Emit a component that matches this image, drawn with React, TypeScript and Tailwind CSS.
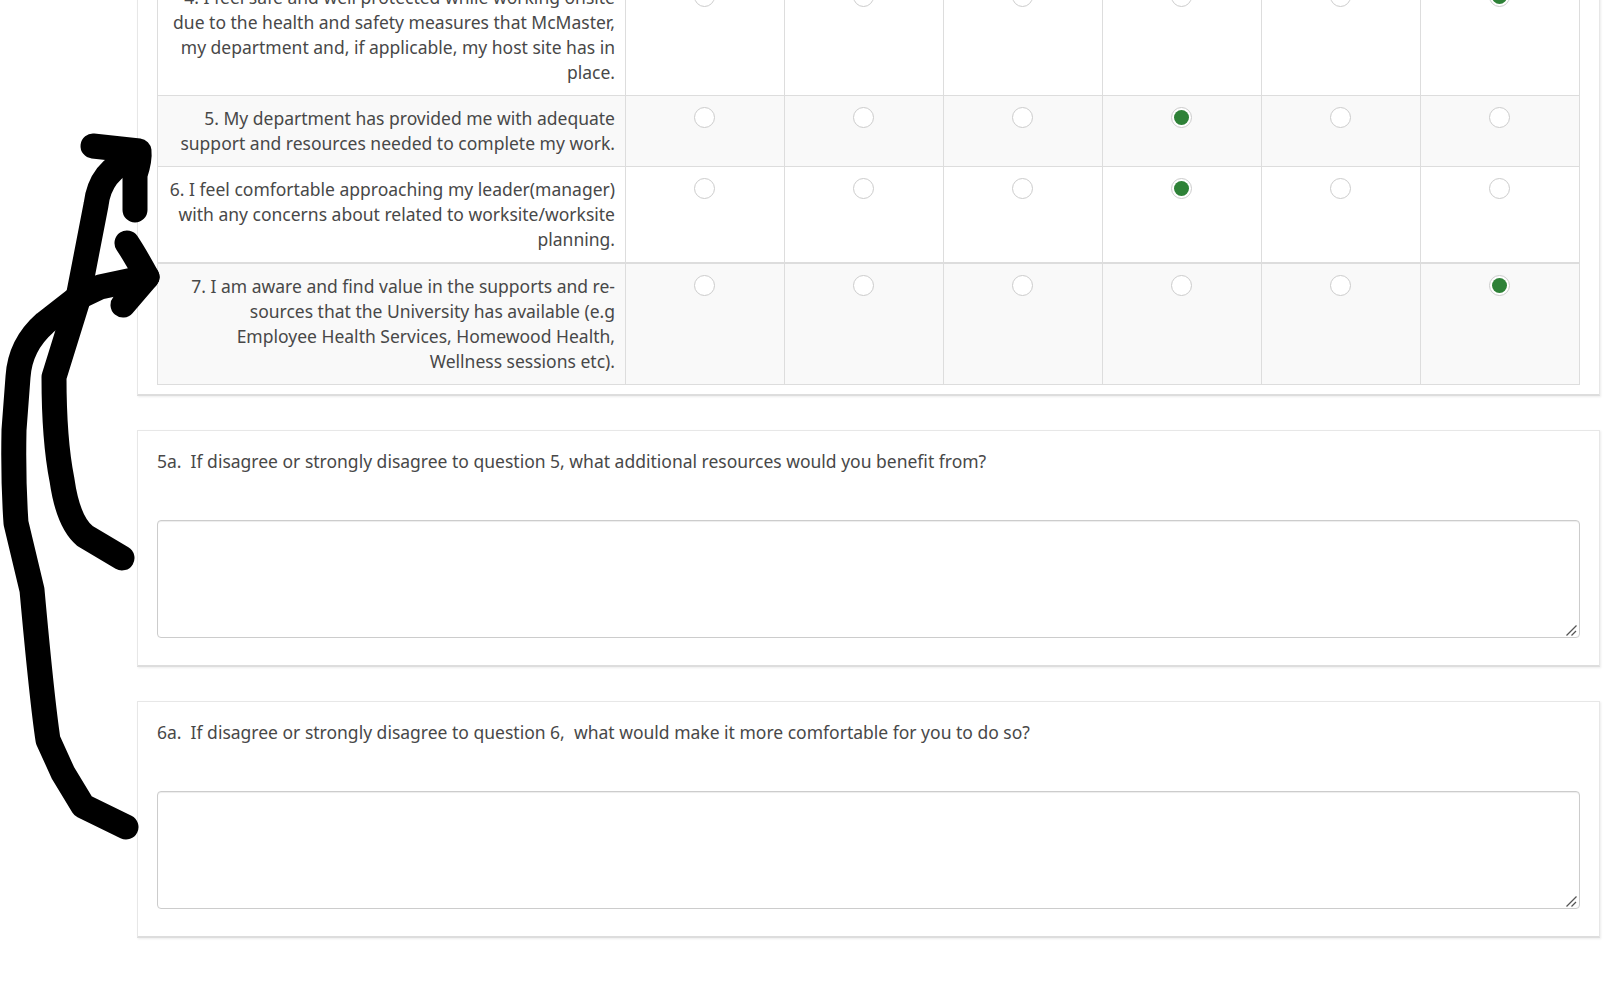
const ROWS = [
  { label: "4. I feel safe and well protected while working onsite due to the health and safety measures that McMaster, my department and, if applicable, my host site has in place.", picked: 5 },
  { label: "5. My department has provided me with adequate support and resources needed to complete my work.", picked: 3 },
  { label: "6. I feel comfortable approaching my leader(manager) with any concerns about related to worksite/worksite planning.", picked: 3 },
  { label: "7. I am aware and find value in the supports and re-sources that the University has available (e.g Employee Health Services, Homewood Health, Wellness sessions etc).", picked: 5 },
];

const QUESTIONS = [
  "5a.  If disagree or strongly disagree to question 5, what additional resources would you benefit from?",
  "6a.  If disagree or strongly disagree to question 6,  what would make it more comfortable for you to do so?",
];

function Radio({ checked }: { checked: boolean }) {
  return (
    <span className="mx-auto mt-[1px] flex h-[21px] w-[21px] items-center justify-center rounded-full border border-[#cccccc] bg-white">
      {checked && <span className="h-[15px] w-[15px] rounded-full bg-[#2e8137]" />}
    </span>
  );
}

function Scribble() {
  return (
    <svg className="absolute left-0 top-0 h-[987px] w-[160px]" viewBox="0 0 160 987" fill="none" stroke="#000" strokeWidth="25" strokeLinecap="round" strokeLinejoin="round">
      <path d="M122 558 L85 536 Q68 522 62 480 Q54 440 54 377 L77 303 L96 205 Q100 170 133 158" />
      <path d="M93 146 L139 151 Q140 160 135 175 L135 210" />
      <path d="M126 827 L83 806 L63 773 L48 740 Q42 700 32 590 L16 523 Q13 480 14 430 L18 377 Q20 345 45 323 L77 298 L100 287 L147 277" />
      <path d="M127 243 Q135 255 147 277 L123 305" />
    </svg>
  );
}

export default function App() {
  return (
    <div className="relative h-[987px] w-full overflow-hidden bg-white font-['Noto_Sans','Open_Sans',sans-serif] text-[17.5px] leading-[25px] text-[#484848]">
      <div className="-mt-[27px] ml-[137px] mr-[21px] flex flex-col">
        <div className="mb-[34px] border border-[#e7e7e7] border-b-2 border-b-[#dddddd] bg-white px-[19px] pb-[9px] shadow-[1px_1px_2px_rgba(0,0,0,0.08)]">
          <table className="w-full table-fixed border-collapse">
            <colgroup>
              <col className="w-[468px]" />
            </colgroup>
            <tbody>
              {ROWS.map((row, i) => (
                <tr key={i} className={i % 2 === 1 ? "bg-[#f9f9f9]" : "bg-white"}>
                  <td className={`border border-[#dddddd] py-[10px] pl-[10px] pr-[10px] text-right align-top ${i === 3 ? "border-t-2" : ""}`}>{row.label}</td>
                  {[0, 1, 2, 3, 4, 5].map((c) => (
                    <td key={c} className={`border border-[#dddddd] py-[10px] pl-[10px] pr-[11px] align-top ${i === 3 ? "border-t-2" : ""}`}>
                      <Radio checked={c === row.picked} />
                    </td>
                  ))}
                </tr>
              ))}
            </tbody>
          </table>
        </div>

        {QUESTIONS.map((q) => (
          <div key={q} className="mb-[34px] border border-[#e7e7e7] border-b-2 border-b-[#dddddd] bg-white px-[19px] pb-[27px] pt-[18px] shadow-[1px_1px_2px_rgba(0,0,0,0.08)]">
            <p className="mb-[46px] whitespace-pre">{q}</p>
            <div className="relative">
              <textarea className="block h-[118px] w-full resize-none rounded border border-[#cccccc] bg-white shadow-[inset_0_1px_1px_rgba(0,0,0,0.075)]" />
              <svg className="absolute bottom-[2px] right-[3px] h-[11px] w-[11px]" viewBox="0 0 11 11" stroke="#555555" strokeWidth="1.2" fill="none">
                <path d="M0.5 10.5 L10.5 0.5" />
                <path d="M5.5 10.5 L10 6" />
              </svg>
            </div>
          </div>
        ))}
      </div>
      <Scribble />
    </div>
  );
}
